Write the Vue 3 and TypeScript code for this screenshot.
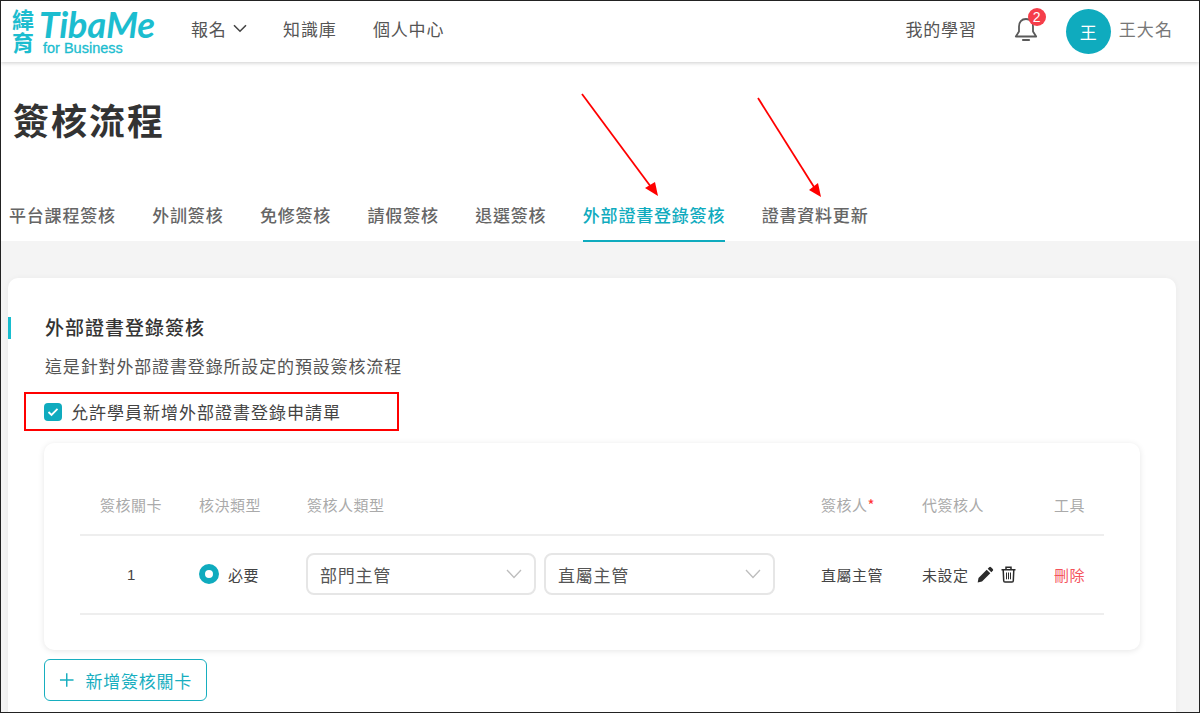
<script setup lang="ts">
const tabs: string[] = ['平台課程簽核', '外訓簽核', '免修簽核', '請假簽核', '退選簽核', '外部證書登錄簽核', '證書資料更新']
const activeTab = '外部證書登錄簽核'
</script>

<template>
  <div class="frame">
    <header class="topbar">
      <div class="brand">
        <div class="brand-cjk">緯育</div>
        <div class="brand-latin">
          <span class="brand-name">TibaMe</span>
          <span class="brand-sub">for Business</span>
        </div>
      </div>
      <nav class="nav">
        <a class="nav-item">報名
          <svg class="chev" width="14" height="9" viewBox="0 0 14 9"><path d="M1 1.2 7 7.2 13 1.2" fill="none" stroke="#444" stroke-width="1.6"/></svg>
        </a>
        <a class="nav-item">知識庫</a>
        <a class="nav-item">個人中心</a>
      </nav>
      <div class="right">
        <a class="nav-item">我的學習</a>
        <div class="bell">
          <svg width="24" height="28" viewBox="0 0 24 28"><path d="M12 3c-4.500 0-7 3-7 7.500v5L1.800 20.500h20.400L19 15.500v-5C19 6 16.500 3 12 3Z" fill="none" stroke="#5a5a5a" stroke-width="1.800" stroke-linejoin="round"/><path d="M9 24h6" stroke="#5a5a5a" stroke-width="2.200" stroke-linecap="round"/></svg>
          <span class="badge">2</span>
        </div>
        <div class="avatar">王</div>
        <span class="username">王大名</span>
      </div>
    </header>

    <section class="head">
      <h1 class="title">簽核流程</h1>
      <div class="tabs">
        <a v-for="t in tabs" :key="t" class="tab" :class="{ active: t === activeTab }">{{ t }}</a>
      </div>
      <svg class="arrows" width="400" height="130" viewBox="0 0 400 130">
        <g stroke="#f00" stroke-width="1.800" fill="#f00">
          <line x1="22" y1="12" x2="91" y2="105"/>
          <polygon points="98,114 85,106 95,100" stroke="none"/>
          <line x1="198" y1="16" x2="254" y2="105"/>
          <polygon points="261,115 249,108 258,101" stroke="none"/>
        </g>
      </svg>
    </section>

    <main class="content">
      <div class="card">
        <h2 class="section-title">外部證書登錄簽核</h2>
        <p class="desc">這是針對外部證書登錄所設定的預設簽核流程</p>
        <label class="check-row">
          <span class="checkbox">
            <svg width="12" height="10" viewBox="0 0 12 10"><path d="M1.500 5 4.500 8 10.500 1.800" fill="none" stroke="#fff" stroke-width="1.800"/></svg>
          </span>
          <span>允許學員新增外部證書登錄申請單</span>
        </label>

        <div class="panel">
          <div class="row header">
            <span class="c1">簽核關卡</span>
            <span class="c2">核決類型</span>
            <span class="c3">簽核人類型</span>
            <span class="c4">簽核人<i class="req">*</i></span>
            <span class="c5">代簽核人</span>
            <span class="c6">工具</span>
          </div>
          <div class="row body">
            <span class="c1 num">1</span>
            <span class="c2 radio"><i class="radio-dot"></i>必要</span>
            <span class="c3 selects">
              <span class="select">部門主管
                <svg width="16" height="10" viewBox="0 0 16 10"><path d="M1 1 8 8.500 15 1" fill="none" stroke="#bdbdbd" stroke-width="1.300"/></svg>
              </span>
              <span class="select">直屬主管
                <svg width="16" height="10" viewBox="0 0 16 10"><path d="M1 1 8 8.500 15 1" fill="none" stroke="#bdbdbd" stroke-width="1.300"/></svg>
              </span>
            </span>
            <span class="c4">直屬主管</span>
            <span class="c5 agent">未設定
              <svg class="pencil" width="17" height="17" viewBox="0 0 17 17"><path d="M12.200 1.200a1.300 1.300 0 0 1 1.800 0l1.800 1.800a1.300 1.300 0 0 1 0 1.800l-1.500 1.500-3.600-3.600ZM9.700 3.700l3.600 3.600-8.300 8.300-4.300.9.800-4.400Z" fill="#2b2b2b"/></svg>
              <svg class="trash" width="15" height="17" viewBox="0 0 15 17"><path d="M.5 3.700h14M5 3.500V1.200h5v2.300M2.200 3.700l.5 11a1.300 1.300 0 0 0 1.300 1.300h7a1.300 1.300 0 0 0 1.300-1.300l.5-11" fill="none" stroke="#2b2b2b" stroke-width="1.500"/><path d="M5.500 6.500v6.800M7.500 6.500v6.800M9.500 6.500v6.800" fill="none" stroke="#2b2b2b" stroke-width="1"/></svg>
            </span>
            <span class="c6 del">刪除</span>
          </div>
        </div>

        <button class="add" type="button">
          <svg width="16" height="16" viewBox="0 0 16 16"><path d="M8 1v14M1 8h14" stroke="#17aebf" stroke-width="1.500"/></svg>
          <span>新增簽核關卡</span>
        </button>
      </div>
    </main>
  </div>
</template>

<style>
html, body { margin: 0; background: #fff; }
</style>

<style scoped>
* { box-sizing: border-box; }
.frame {
  width: 1200px; height: 713px; overflow: hidden; position: relative;
  border: 1px solid #222;
  font-family: "Noto Sans CJK TC", "Noto Sans", sans-serif;
  color: #333; background: #f4f4f4;
}
.topbar {
  height: 61px; background: #fff; display: flex; align-items: center;
  box-shadow: 0 1px 4px rgba(0,0,0,.2); position: relative; z-index: 1;
  padding: 0 26px 0 8px;
}
.brand { display: flex; width: 182px; color: #1cbdcf; align-items: flex-start; }
.brand-cjk {
  writing-mode: vertical-rl; text-orientation: upright; font-weight: 700; font-size: 22px; line-height: 24px;
  letter-spacing: 1px; width: 26px; margin-top: 1px;
}
.brand-latin { display: flex; flex-direction: column; margin-left: 5px; }
.brand-name { font-family: Lato, "Noto Sans", sans-serif; font-style: italic; font-weight: 700; font-size: 36.500px; line-height: 33px; letter-spacing: -.2px; margin-left: -1px; }
.brand-sub { font-family: "Liberation Sans", sans-serif; font-size: 14.500px; line-height: 15px; font-weight: 400; margin-left: 3px; -webkit-text-stroke: .3px #1cbdcf; }
.nav { display: flex; gap: 36.500px; padding-bottom: 6px; }
.nav-item { font-size: 17px; letter-spacing: .8px; color: #555; display: flex; align-items: center; gap: 6px; }
.right { margin-left: auto; display: flex; align-items: center; }
.right .nav-item { margin-bottom: 6px; }
.bell { position: relative; width: 24px; height: 28px; margin: 0 0 4px 37px; }
.badge {
  position: absolute; top: -8px; left: 14px; width: 18px; height: 18px; border-radius: 50%;
  background: #f53e4a; color: #fff; font: 14px/18px "Liberation Sans", sans-serif; text-align: center;
}
.avatar {
  width: 45px; height: 45px; border-radius: 50%; background: #0fabbe; color: #fff;
  margin-left: 28px; text-align: center; line-height: 45px; font-size: 17px;
}
.username { color: #777; font-size: 17px; letter-spacing: 1.100px; margin: 0 0 6px 8px; }
.head { background: #fff; height: 179px; position: relative; padding: 0 0 0 8px; }
.title { margin: 0; padding: 30px 0 0 4px; font-size: 36px; line-height: 54px; font-weight: 700; letter-spacing: 2px; color: #333; height: 123px; }
.tabs { display: flex; gap: 36.450px; }
.tab { font-size: 17px; font-weight: 500; color: #666; height: 57px; line-height: 60px; letter-spacing: .8px; white-space: nowrap; }
.tab.active { color: #0fabbe; border-bottom: 2px solid #0fabbe; }
.arrows { position: absolute; left: 559px; top: 20px; }
.content { padding: 37px 0 0 7px; }
.card {
  width: 1168px; height: 460px; background: #fff; border-radius: 10px; position: relative;
  box-shadow: 0 0 6px rgba(0,0,0,.04); padding-top: 37px;
}
.section-title {
  margin: 0; font-size: 19px; letter-spacing: 1px; font-weight: 500; line-height: 24px; padding-left: 37px; position: relative; color: #333;
}
.section-title::before { content: ""; position: absolute; left: 0; top: 2px; width: 3px; height: 22px; background: #17bdcf; }
.desc { margin: 15px 0 0; padding-left: 37px; font-size: 17px; letter-spacing: .85px; line-height: 24px; color: #555; }
.check-row {
  display: flex; align-items: center; gap: 9px; margin: 14px 0 0 16px; width: 375px; height: 39px;
  border: 2px solid #f00; padding-left: 18px; font-size: 17px; letter-spacing: 1px; color: #444;
}
.checkbox { width: 18px; height: 18px; border-radius: 4px; background: #0fabbe; display: flex; align-items: center; justify-content: center; }
.panel {
  margin: 12px 0 0 36px; width: 1096px; height: 207px; border-radius: 10px; background: #fff;
  box-shadow: 0 1px 6px rgba(0,0,0,.1); padding: 36px 36px 0;
}
.row { display: grid; grid-template-columns: 100px 127px 514px 101px 132px 1fr; align-items: center; font-size: 15px; letter-spacing: .5px; }
.row.header { height: 57px; padding-bottom: 4px; color: #aaa; border-bottom: 2px solid #eee; }
.c1 { padding-left: 20px; }
.c2 { padding-left: 19px; }
.req { color: #f33; font-style: normal; }
.row.body { height: 79px; padding-bottom: 1px; border-bottom: 2px solid #eee; color: #444; }
.num { padding-left: 47px; font-family: "Liberation Sans", sans-serif; }
.radio { display: flex; align-items: center; gap: 9px; }
.radio-dot { width: 20px; height: 20px; border-radius: 50%; border: 6px solid #0fabbe; background: #fff; }
.selects { display: flex; gap: 8px; margin-left: -1px; }
.select {
  width: 230px; height: 42px; border: 2px solid #e6e6e6; border-radius: 8px; display: flex; align-items: center;
  justify-content: space-between; padding: 0 12px; font-size: 17px; letter-spacing: .75px; color: #555;
}
.select:last-child { width: 231px; }
.agent { display: flex; align-items: center; }
.pencil { margin-left: 8px; }
.trash { margin-left: 7px; }
.del { color: #f5535c; }
.add {
  margin: 9px 0 0 36px; width: 163px; height: 42px; border: 1px solid #17aebf; border-radius: 6px; background: #fff;
  color: #17aebf; font: 400 17px "Noto Sans CJK TC", sans-serif; letter-spacing: .75px; display: flex; align-items: center; gap: 11px; padding: 0 14px; white-space: nowrap;
}
</style>
